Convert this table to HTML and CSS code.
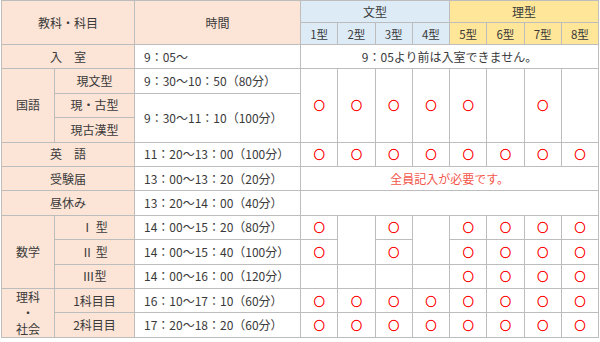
FILE: index.html
```html
<!DOCTYPE html>
<html lang="ja">
<head>
<meta charset="utf-8">
<link rel="stylesheet" href="styles.css">
</head>
<body>
<table class="sched">
  <colgroup>
    <col class="c-main"><col class="c-sub"><col class="c-time">
    <col class="c-type"><col class="c-type"><col class="c-type"><col class="c-type">
    <col class="c-type"><col class="c-type"><col class="c-type"><col class="c-type">
  </colgroup>
  <tr class="hrow">
    <td class="peach" colspan="2" rowspan="2">教科・科目</td>
    <td class="peach" rowspan="2">時間</td>
    <td class="blue" colspan="4">文型</td>
    <td class="gold" colspan="4">理型</td>
  </tr>
  <tr class="hrow">
    <td class="blue small">1型</td><td class="blue small">2型</td><td class="blue small">3型</td><td class="blue small">4型</td>
    <td class="gold small">5型</td><td class="gold small">6型</td><td class="gold small">7型</td><td class="gold small">8型</td>
  </tr>
  <tr class="brow">
    <td class="peach" colspan="2">入　室</td>
    <td class="time">9：05～</td>
    <td colspan="8">9：05より前は入室できません。</td>
  </tr>
  <tr class="brow">
    <td class="peach" rowspan="3">国語</td>
    <td class="peach">現文型</td>
    <td class="time">9：30～10：50（80分）</td>
    <td class="ok" rowspan="3">○</td><td class="ok" rowspan="3">○</td><td class="ok" rowspan="3">○</td><td class="ok" rowspan="3">○</td>
    <td class="ok" rowspan="3">○</td><td rowspan="3"></td><td class="ok" rowspan="3">○</td><td rowspan="3"></td>
  </tr>
  <tr class="brow">
    <td class="peach">現・古型</td>
    <td class="time" rowspan="2">9：30～11：10（100分）</td>
  </tr>
  <tr class="brow">
    <td class="peach">現古漢型</td>
  </tr>
  <tr class="brow">
    <td class="peach" colspan="2">英　語</td>
    <td class="time">11：20～13：00（100分）</td>
    <td class="ok">○</td><td class="ok">○</td><td class="ok">○</td><td class="ok">○</td>
    <td class="ok">○</td><td class="ok">○</td><td class="ok">○</td><td class="ok">○</td>
  </tr>
  <tr class="brow">
    <td class="peach" colspan="2">受験届</td>
    <td class="time">13：00～13：20（20分）</td>
    <td class="note" colspan="8">全員記入が必要です。</td>
  </tr>
  <tr class="brow">
    <td class="peach" colspan="2">昼休み</td>
    <td class="time">13：20～14：00（40分）</td>
    <td colspan="8"></td>
  </tr>
  <tr class="brow">
    <td class="peach" rowspan="3">数学</td>
    <td class="peach">Ⅰ 型</td>
    <td class="time">14：00～15：20（80分）</td>
    <td class="ok">○</td><td rowspan="2"></td><td class="ok">○</td><td rowspan="2"></td>
    <td class="ok">○</td><td class="ok">○</td><td class="ok">○</td><td class="ok">○</td>
  </tr>
  <tr class="brow">
    <td class="peach">Ⅱ 型</td>
    <td class="time">14：00～15：40（100分）</td>
    <td class="ok">○</td><td class="ok">○</td>
    <td class="ok">○</td><td class="ok">○</td><td class="ok">○</td><td class="ok">○</td>
  </tr>
  <tr class="brow">
    <td class="peach">Ⅲ型</td>
    <td class="time">14：00～16：00（120分）</td>
    <td></td><td></td><td></td><td></td>
    <td class="ok">○</td><td class="ok">○</td><td class="ok">○</td><td class="ok">○</td>
  </tr>
  <tr class="brow">
    <td class="peach stack" rowspan="2">理科<br>・<br>社会</td>
    <td class="peach">1科目目</td>
    <td class="time">16：10～17：10（60分）</td>
    <td class="ok">○</td><td class="ok">○</td><td class="ok">○</td><td class="ok">○</td>
    <td class="ok">○</td><td class="ok">○</td><td class="ok">○</td><td class="ok">○</td>
  </tr>
  <tr class="brow">
    <td class="peach">2科目目</td>
    <td class="time">17：20～18：20（60分）</td>
    <td class="ok">○</td><td class="ok">○</td><td class="ok">○</td><td class="ok">○</td>
    <td class="ok">○</td><td class="ok">○</td><td class="ok">○</td><td class="ok">○</td>
  </tr>
</table>
</body>
</html>
```

FILE: styles.css
```css
html, body {
  margin: 0;
  padding: 0;
  background: #ffffff;
}

body {
  font-family: "Noto Sans CJK JP", "Noto Sans", sans-serif;
  color: #3a3a3a;
  font-size: 12px;
}

.sched {
  border-collapse: collapse;
  table-layout: fixed;
  width: 597px;
  margin-left: 1px;
  border: 1px solid #a6a6a6;
}

.c-main { width: 53px; }
.c-sub { width: 80px; }
.c-time { width: 166px; }
.c-type { width: 37.25px; }

.sched td {
  border: 1px solid #bdbdbd;
  padding: 0;
  text-align: center;
  vertical-align: middle;
  line-height: 14px;
  white-space: nowrap;
  overflow: hidden;
}

.hrow { height: 22px; }
.brow { height: 24.4px; }

.peach { background: #fce4d6; }
.blue { background: #ddebf7; }
.gold { background: #ffe699; }

.small { font-size: 11.5px; }

.sched td.time {
  text-align: left;
  padding-left: 9px;
}

.ok {
  color: #ff0000;
  font-size: 11px;
  font-weight: bold;
  -webkit-text-stroke: 0.4px #ff0000;
}

.note {
  color: #f4564a;
}

.sched td.stack {
  line-height: 16px;
}
```
